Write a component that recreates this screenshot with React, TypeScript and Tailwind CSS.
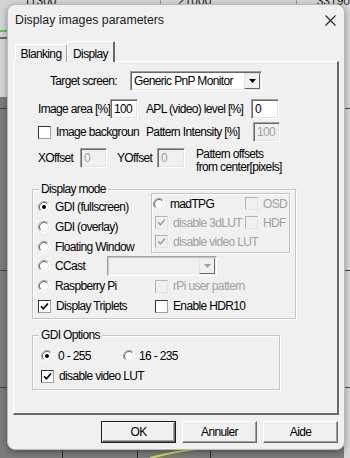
import React from 'react';

const ui = "font-['Liberation_Sans',Arial,sans-serif] text-[12px] tracking-[-0.65px] text-black";

const Radio: React.FC<{ checked?: boolean; disabled?: boolean }> = ({ checked, disabled }) => (
  <svg width="12" height="12" viewBox="0 0 12 12" className="shrink-0">
    <circle cx="6" cy="6" r="5.5" fill={disabled ? '#f0f0f0' : '#ffffff'} />
    <path d="M2.1 9.9 A5.5 5.5 0 0 1 9.9 2.1" stroke="#a0a0a0" fill="none" />
    <path d="M2.8 9.2 A4.5 4.5 0 0 1 9.2 2.8" stroke="#696969" fill="none" />
    <path d="M9.9 2.1 A5.5 5.5 0 0 1 2.1 9.9" stroke="#ffffff" fill="none" />
    <path d="M9.2 2.8 A4.5 4.5 0 0 1 2.8 9.2" stroke="#e3e3e3" fill="none" />
    {checked && <circle cx="6" cy="6" r="2" fill="#000" />}
  </svg>
);

const Check: React.FC<{ checked?: boolean; disabled?: boolean }> = ({ checked, disabled }) => (
  <div
    className={`w-[13px] h-[13px] shrink-0 flex items-center justify-center border ${
      disabled
        ? 'bg-[#f0f0f0] border-t-[#b4b4b4] border-l-[#b4b4b4] border-r-[#e3e3e3] border-b-[#e3e3e3]'
        : 'bg-white border-t-[#333333] border-l-[#333333] border-r-[#a0a0a0] border-b-[#a0a0a0]'
    }`}
  >
    {checked && (
      <svg width="9" height="9" viewBox="0 0 9 9">
        <path d="M1 4.2 L3.4 6.8 L8 1.5" stroke={disabled ? '#a0a0a0' : '#000'} strokeWidth="1.6" fill="none" />
      </svg>
    )}
  </div>
);

const Field: React.FC<{ value: string; w: string; disabled?: boolean }> = ({ value, w, disabled }) => (
  <div
    className={`${w} h-[20px] shrink-0 flex items-center pl-[3px] border border-t-[#a0a0a0] border-l-[#a0a0a0] border-r-white border-b-white shadow-[inset_1px_1px_0_#696969,inset_-1px_-1px_0_#e3e3e3] ${
      disabled ? 'bg-[#f0f0f0] text-[#a0a0a0]' : 'bg-white'
    }`}
  >
    {value}
  </div>
);

const Arrow: React.FC<{ disabled?: boolean }> = ({ disabled }) => (
  <div className="w-[16px] h-[16px] bg-[#f0f0f0] border border-t-[#e3e3e3] border-l-[#e3e3e3] border-r-[#696969] border-b-[#696969] flex items-center justify-center">
    <svg width="7" height="4" viewBox="0 0 7 4">
      <path d="M0 0 H7 L3.5 4 Z" fill={disabled ? '#a0a0a0' : '#000'} />
    </svg>
  </div>
);

const Label: React.FC<{ children: React.ReactNode; disabled?: boolean; className?: string }> = ({
  children,
  disabled,
  className = '',
}) => <span className={`whitespace-nowrap ${disabled ? 'text-[#a0a0a0]' : ''} ${className}`}>{children}</span>;

const Group: React.FC<{ title: string; className: string; children: React.ReactNode }> = ({ title, className, children }) => (
  <div className={`relative border border-[#c4c4c4] shadow-[inset_1px_1px_0_#ffffff,1px_1px_0_#ffffff] ${className}`}>
    <span className="absolute -top-[8px] left-[6px] px-[2px] bg-[#f0f0f0] leading-[14px]">{title}</span>
    {children}
  </div>
);

const Btn: React.FC<{ children: React.ReactNode; def?: boolean }> = ({ children, def }) => (
  <div className={`w-[75px] h-[22px] ${def ? 'border border-[#1a1a1a]' : ''}`}>
    <div className="w-full h-full flex items-center justify-center bg-[#f0f0f0] border border-t-white border-l-white border-r-[#696969] border-b-[#696969] shadow-[inset_-1px_-1px_0_#a0a0a0]">
      {children}
    </div>
  </div>
);

const App: React.FC = () => {
  return (
    <div className={`relative w-[350px] h-[458px] overflow-hidden bg-[#7b7b7b] ${ui}`}>
      {/* application behind the dialog */}
      <div className="absolute left-0 top-0 w-[350px] h-[97px] bg-[#d4d4d4]" />
      <div className="absolute left-0 top-[30px] w-[350px] h-[2px] bg-[#55c855]" />
      <div className="absolute left-0 top-[37px] w-[350px] h-[2px] bg-[#6b6b6b]" />
      <div className="absolute right-0 top-0 w-[6px] h-[458px] bg-[#d8d8d8]" />
      <div className="absolute left-0 top-[108px] w-[350px] h-px bg-[#2f4f3f]" />
      <div className="absolute left-0 top-[270px] w-[350px] h-px bg-[#2f4f3f]" />
      <div className="absolute left-0 top-[387px] w-[350px] h-px bg-[#2f4f3f]" />
      <div className="absolute left-[62px] top-[440px] w-px h-[18px] bg-[#1f3a2a]" />
      <div className="absolute left-[137px] top-[440px] w-px h-[18px] bg-[#1f3a2a]" />
      <div className="absolute left-[210px] top-[440px] w-px h-[18px] bg-[#1f3a2a]" />
      <svg className="absolute left-[140px] top-[446px]" width="80" height="12" viewBox="0 0 80 12">
        <path d="M10 12 Q40 4 80 0" stroke="#d9d94a" strokeWidth="2" fill="none" />
      </svg>
      <div className="absolute left-0 -top-[8px] flex w-[350px] text-[12px] tracking-normal text-[#222]">
        <span className="ml-[24px] w-[150px] border-r border-[#999]">11300</span>
        <span className="ml-[17px] w-[130px] border-r border-[#999]">21000</span>
        <span className="ml-[20px]">33190</span>
      </div>

      {/* dialog */}
      <div className="relative ml-[7px] mt-[4px] w-[338px] h-[446px] rounded-[8px] bg-[#f0f0f0] border border-[#b9b9b9] shadow-[0_2px_6px_rgba(0,0,0,0.35)] flex flex-col">
        <div className="h-[31px] flex items-center justify-between pl-[7px] pr-[8px] text-[12.3px] tracking-normal text-[#1a1a1a]">
          <span>Display images parameters</span>
          <svg width="11" height="11" viewBox="0 0 11 11">
            <path d="M0.5 0.5 L10.5 10.5 M10.5 0.5 L0.5 10.5" stroke="#222" strokeWidth="1.1" />
          </svg>
        </div>

        {/* tabs */}
        <div className="mt-[5px] pl-[7px] flex items-end h-[21px] relative z-10 -mb-[1px]">
          <div className="w-[52px] h-[18px] flex items-center justify-center bg-[#f0f0f0] border-t border-l border-white border-r border-r-[#a0a0a0] rounded-t-[2px]">
            Blanking
          </div>
          <div className="w-[48px] h-[21px] flex items-start pt-[3px] justify-center bg-[#f0f0f0] border-t border-l border-white border-r-2 border-r-[#696969] rounded-t-[2px]">
            Display
          </div>
        </div>

        {/* tab panel */}
        <div className="ml-[5px] w-[326px] h-[354px] border border-t-white border-l-white border-r-2 border-b-2 border-r-[#696969] border-b-[#696969] bg-[#f0f0f0] flex flex-col">
          <div className="mt-[9px] h-[20px] pl-[36px] flex items-center">
            <Label className="w-[80px]">Target screen:</Label>
            <div className="w-[132px] h-[20px] flex items-center justify-between pl-[3px] pr-[1px] bg-white border border-t-[#a0a0a0] border-l-[#a0a0a0] border-r-white border-b-white shadow-[inset_1px_1px_0_#696969,inset_-1px_-1px_0_#e3e3e3]">
              <span>Generic PnP Monitor</span>
              <Arrow />
            </div>
          </div>

          <div className="mt-[8px] h-[20px] pl-[24px] flex items-center">
            <Label className="w-[72px]">Image area [%]</Label>
            <Field value="100" w="w-[28px]" />
            <Label className="ml-[8px] w-[105px]">APL (video) level [%]</Label>
            <Field value="0" w="w-[28px]" />
          </div>

          <div className="mt-[3px] h-[20px] pl-[24px] flex items-center">
            <Check />
            <Label className="ml-[5px] w-[90px] overflow-hidden">Image backgroun</Label>
            <Label className="w-[107px]">Pattern Intensity [%]</Label>
            <Field value="100" w="w-[27px]" disabled />
          </div>

          <div className="mt-[6px] h-[20px] pl-[24px] flex items-start">
            <Label className="w-[42px] leading-[20px]">XOffset</Label>
            <Field value="0" w="w-[27px]" disabled />
            <Label className="ml-[10px] w-[40px] leading-[20px]">YOffset</Label>
            <Field value="0" w="w-[28px]" disabled />
            <div className="ml-[11px] leading-[13px]">
              <div>Pattern offsets</div>
              <div>from center[pixels]</div>
            </div>
          </div>

          <Group title="Display mode" className="mt-[21px] ml-[18px] w-[264px] h-[130px]">
            <div className="h-[66px] flex">
              <div className="w-[118px] pt-[7px] pl-[5px]">
                <div className="h-[20px] flex items-center gap-[5px]">
                  <Radio checked />
                  <Label>GDI (fullscreen)</Label>
                </div>
                <div className="h-[20px] flex items-center gap-[5px]">
                  <Radio />
                  <Label>GDI (overlay)</Label>
                </div>
                <div className="h-[20px] flex items-center gap-[5px]">
                  <Radio />
                  <Label>Floating Window</Label>
                </div>
              </div>
              <div className="mt-[3px] w-[139px] h-[60px] border border-[#c4c4c4] shadow-[inset_1px_1px_0_#ffffff,1px_1px_0_#ffffff]">
                <div className="h-[19px] flex items-center">
                  <div className="w-[93px] pl-[1px] flex items-center gap-[5px]">
                    <Radio />
                    <Label>madTPG</Label>
                  </div>
                  <Check disabled />
                  <Label disabled className="ml-[5px]">OSD</Label>
                </div>
                <div className="h-[19px] flex items-center">
                  <div className="w-[93px] pl-[3px] flex items-center gap-[5px]">
                    <Check checked disabled />
                    <Label disabled>disable 3dLUT</Label>
                  </div>
                  <Check disabled />
                  <Label disabled className="ml-[5px]">HDF</Label>
                </div>
                <div className="h-[19px] pl-[3px] flex items-center gap-[5px]">
                  <Check checked disabled />
                  <Label disabled>disable video LUT</Label>
                </div>
              </div>
            </div>
            <div className="h-[20px] pl-[5px] flex items-center">
              <div className="w-[69px] flex items-center gap-[5px]">
                <Radio />
                <Label>CCast</Label>
              </div>
              <div className="w-[110px] h-[20px] flex items-center justify-end pr-[1px] bg-[#f0f0f0] border border-t-[#a0a0a0] border-l-[#a0a0a0] border-r-white border-b-white shadow-[inset_1px_1px_0_#c8c8c8]">
                <Arrow disabled />
              </div>
            </div>
            <div className="h-[20px] pl-[5px] flex items-center">
              <div className="w-[117px] flex items-center gap-[5px]">
                <Radio />
                <Label>Raspberry Pi</Label>
              </div>
              <Check disabled />
              <Label disabled className="ml-[5px]">rPi user pattern</Label>
            </div>
            <div className="h-[20px] pl-[5px] flex items-center">
              <div className="w-[117px] flex items-center gap-[5px]">
                <Check checked />
                <Label>Display Triplets</Label>
              </div>
              <Check />
              <Label className="ml-[5px]">Enable HDR10</Label>
            </div>
          </Group>

          <Group title="GDI Options" className="mt-[16px] ml-[18px] w-[248px] h-[55px]">
            <div className="mt-[10px] h-[20px] pl-[8px] flex items-center">
              <div className="w-[82px] flex items-center gap-[5px]">
                <Radio checked />
                <Label>0 - 255</Label>
              </div>
              <Radio />
              <Label className="ml-[4px]">16 - 235</Label>
            </div>
            <div className="h-[20px] pl-[8px] flex items-center gap-[5px]">
              <Check checked />
              <Label>disable video LUT</Label>
            </div>
          </Group>
        </div>

        {/* buttons */}
        <div className="mt-[6px] pr-[6px] flex justify-end gap-[6px]">
          <Btn def>OK</Btn>
          <Btn>Annuler</Btn>
          <Btn>Aide</Btn>
        </div>
      </div>
    </div>
  );
};

export default App;
